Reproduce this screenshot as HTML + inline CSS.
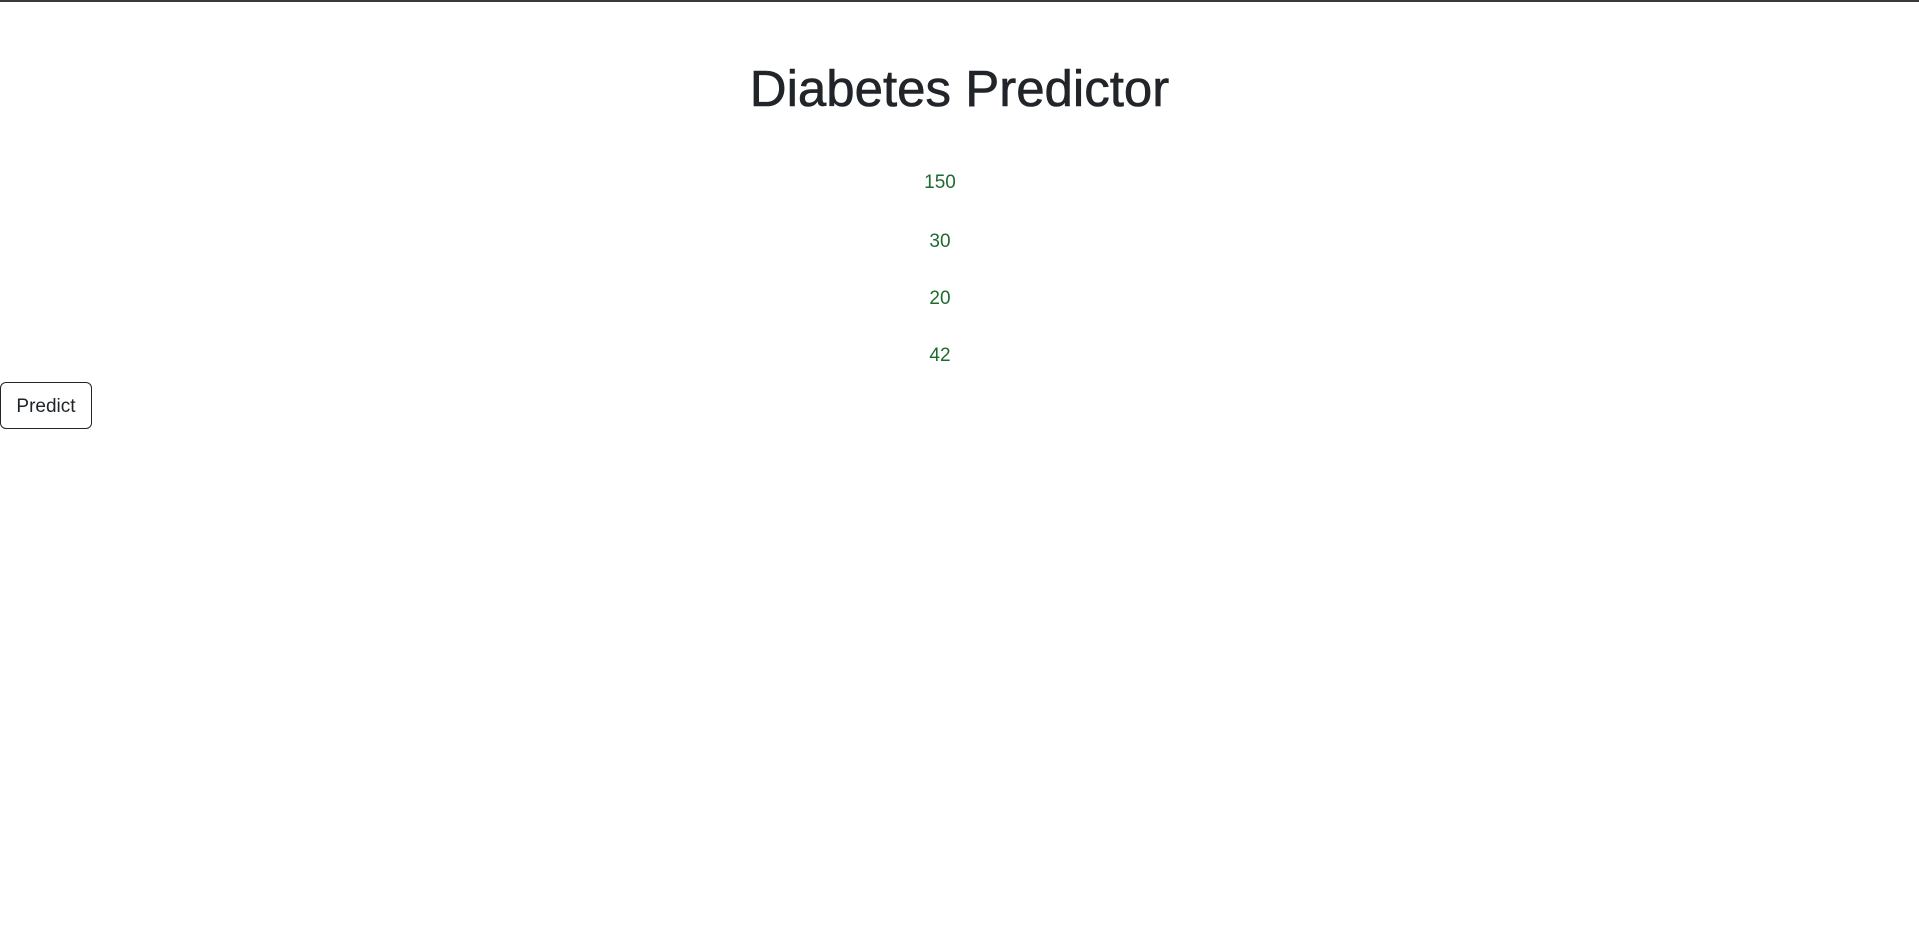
<!DOCTYPE html>
<html><head><meta charset="utf-8"><style>
html,body{margin:0;padding:0;background:#fff;width:1919px;height:929px;overflow:hidden;font-family:"Liberation Sans",sans-serif;}
.top{position:absolute;left:0;top:0;width:1919px;height:2px;background:#3a3a3a;}
h1{position:absolute;left:0;width:1919px;top:59px;margin:0;text-align:center;font-weight:normal;font-size:51px;line-height:60px;color:#212529;-webkit-text-stroke:0.6px #212529;}
.n{position:absolute;left:840px;width:200px;text-align:center;font-size:19px;line-height:24px;color:#1e6b2e;}
.btn{position:absolute;left:0;top:382px;width:90px;height:45px;border:1px solid #212529;border-radius:6px;box-sizing:content-box;font-size:19px;line-height:47px;text-align:center;color:#212529;}
</style></head><body>
<div class="top"></div>
<h1>Diabetes Predictor</h1>
<div class="n" style="top:171px">150</div>
<div class="n" style="top:230px">30</div>
<div class="n" style="top:287px">20</div>
<div class="n" style="top:344px">42</div>
<div class="btn">Predict</div>
</body></html>
